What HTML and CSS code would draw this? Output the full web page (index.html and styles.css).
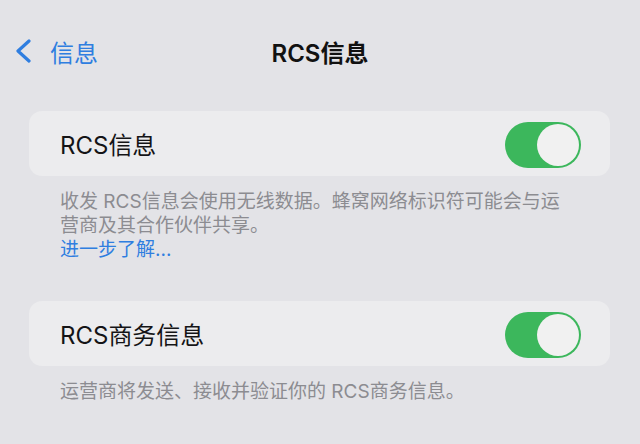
FILE: index.html
```html
<!DOCTYPE html>
<html lang="zh-CN">
<head>
<meta charset="utf-8">
<link rel="stylesheet" href="styles.css">
</head>
<body>
<div class="screen">
  <header class="nav">
    <a class="back">
      <svg class="chev" width="16" height="26" viewBox="0 0 16 26"><polyline points="13,3 2,13 13,23" fill="none" stroke="#2f7ee0" stroke-width="3.2" stroke-linecap="round" stroke-linejoin="round"/></svg>
      <span>信息</span>
    </a>
    <h1 class="title">RCS信息</h1>
    <div></div>
  </header>

  <section class="group first">
    <div class="card">
      <span class="label">RCS信息</span>
      <span class="toggle"><span class="knob"></span></span>
    </div>
    <p class="foot">收发 RCS信息会使用无线数据。蜂窝网络标识符可能会与运<br>营商及其合作伙伴共享。<br><a class="link">进一步了解...</a></p>
  </section>

  <section class="group">
    <div class="card">
      <span class="label">RCS商务信息</span>
      <span class="toggle"><span class="knob"></span></span>
    </div>
    <p class="foot">运营商将发送、接收并验证你的 RCS商务信息。</p>
  </section>
</div>
</body>
</html>
```

FILE: styles.css
```css
html, body {
  margin: 0;
  padding: 0;
}
body {
  background: #e3e3e7;
  font-family: "Inter", "Noto Sans CJK SC", sans-serif;
  color: #1c1c1e;
}
.screen {
  width: 640px;
  height: 444px;
  overflow: hidden;
}
.nav {
  height: 102px;
  display: grid;
  grid-template-columns: 1fr auto 1fr;
  align-items: center;
}
.back {
  display: flex;
  align-items: center;
  gap: 18px;
  padding-left: 16px;
  color: #2f7ee0;
  font-size: 24px;
}
.chev {
  display: block;
}
.title {
  margin: 0;
  font-size: 24px;
  font-weight: 600;
  color: #111;
}
.group {
  margin: 0 30px 0 29px;
}
.group.first {
  margin-top: 9px;
  margin-bottom: 39px;
}
.card {
  height: 65px;
  background: #ececee;
  border-radius: 13px;
  display: flex;
  align-items: center;
  justify-content: space-between;
  padding: 0 29px 0 31px;
}
.label {
  font-size: 24px;
  color: #141416;
}
.toggle {
  width: 76px;
  height: 46px;
  border-radius: 23px;
  background: #3cb75c;
  display: flex;
  align-items: center;
  justify-content: flex-end;
  padding-right: 2px;
  box-sizing: border-box;
  margin-top: 2px;
}
.knob {
  width: 42px;
  height: 42px;
  border-radius: 50%;
  background: #f1f1f1;
}
.foot {
  margin: 0;
  padding: 14px 0 0 31px;
  font-size: 19px;
  line-height: 24px;
  color: #8c8c91;
}
.link {
  color: #2f7ee0;
}
```
